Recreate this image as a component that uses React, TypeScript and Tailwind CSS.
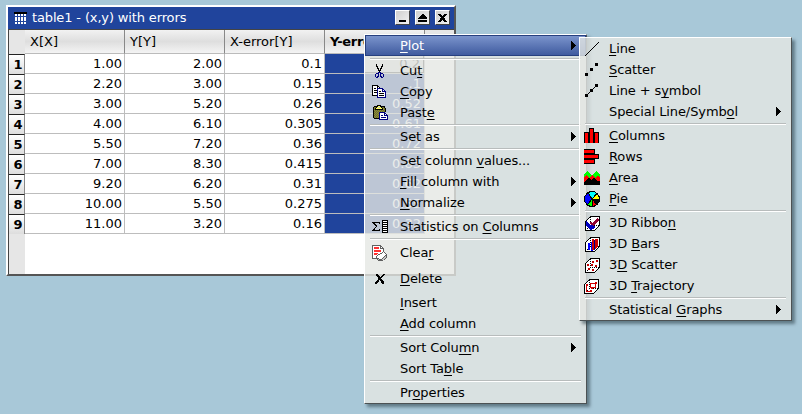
import React from "react";

type IconProps = { name: string };

const palette: Record<string, string> = {
  k: "#000000",
  w: "#ffffff",
  n: "#000080",
  y: "#ffff60",
  o: "#6e6e28",
  g: "#8a8a40",
  s: "#c8c8c8",
  d: "#606060",
  r: "#ff3030",
};

function Pixels({ rows }: { rows: string[] }) {
  return (
    <>
      {rows.flatMap((row, y) =>
        row.split("").map((c, x) =>
          palette[c] ? <rect key={x + "-" + y} x={x} y={y} width={1} height={1} fill={palette[c]} /> : null,
        ),
      )}
    </>
  );
}

const CUT = [
  "",
  "....k.....k",
  "....k.....k",
  "....kk...kk",
  ".....k...k",
  ".....kk.kk",
  "......k.k",
  "......kkk",
  ".......k",
  "......nnn",
  "....nnn.nnn",
  "...n..n.n..n",
  "...n..n.n..n",
  "...n.nn.nn.n",
  "....nn...nn",
];

const COPY = [
  "",
  "kkkkkk",
  "kwwwwkk",
  "kwwwwkwk",
  "kwkkwnnnnnn",
  "kwwwwnwwwwnn",
  "kwkkknwwwwnwn",
  "kwwwwnwkkwnnnn",
  "kwkkknwwwwwwwn",
  "kwwwwnwkkkkkwn",
  "kwwwwnwwwwwwwn",
  "kkkkknwkkkkkwn",
  ".....nwwwwwwwn",
  ".....nnnnnnnnn",
];

const PASTE = [
  ".....kkkk",
  "..kkkkyykkkkk",
  ".kooky..ykook",
  ".kgkyyyyyykgok",
  ".kokkkkkkkkgok",
  ".kgogogogogogk",
  ".kogogogogogok",
  ".kgogognnnnnn",
  ".kogogonwwwwnn",
  ".kgogognwwwwnwn",
  ".kogogonwnnwnnnn",
  ".kgogognwwwwwwwn",
  ".kogogonwnnnnnwn",
  "..kkkkknwwwwwwwn",
  ".......nnnnnnnnn",
];

const SUM = [
  "",
  "..........kkkkkk",
  "..........kwwwwk",
  "kkkkkkkk..kkkkkk",
  ".kk....k..kwwwwk",
  "..kk......kkkkkk",
  "...kk.....kwwwwk",
  "....k.....kkkkkk",
  "...k......kwwwwk",
  "..k.......kkkkkk",
  ".kk....k..kwwwwk",
  "kkkkkkkk..kkkkkk",
  "..........kwwwwk",
  "..........kkkkkk",
];

const CLEAR = [
  "ddddddddd",
  "dwwwwwwwdd",
  "dwrrrrrwdwd",
  "dwrrrrrwdddd",
  "dwwwwwwwwwwd",
  "dwrrrrrrrwwd",
  "dwrrrrrrrwwd",
  "dwwwwwwwwwdwd",
  "dwrrrrwwddwwwd",
  "dwrrrwddwwwwwwd",
  "dwwwwdwwwwwwwdd",
  "dwwwdwwwwwwwdsd",
  "dwwwdwwwwwwdssd",
  "dddddddwwwdssd",
  ".....dsdddssd",
  "......ddddd",
];

const DELETE = [
  "",
  "",
  "",
  "....kk.....kk",
  "....kkk...kk",
  ".....kkk.kk",
  "......kkkk",
  "......kkk",
  "......kkkk",
  ".....kk.kkk",
  "....kkk..kkk",
  "...kkk...kkk",
  "...kk.....kk",
];

function Cube() {
  return (
    <>
      <path d="M1.500 6.500L6.500 1.500H15.500V10.500L10.500 15.500H1.500Z" fill="#fff" stroke="#000" />
      <path d="M6.500 2v8.500h8M6.500 10.500L2 15" fill="none" stroke="#000" strokeDasharray="1 1" />
    </>
  );
}

function Dots({ points, size = 2 }: { points: number[][]; size?: number }) {
  return (
    <>
      {points.map(([x, y]) => (
        <rect key={x + "," + y} x={x} y={y} width={size} height={size} />
      ))}
    </>
  );
}

const glyphs: Record<string, React.ReactNode> = {
  cut: <Pixels rows={CUT} />,
  copy: <Pixels rows={COPY} />,
  paste: <Pixels rows={PASTE} />,
  sum: <Pixels rows={SUM} />,
  clear: <Pixels rows={CLEAR} />,
  delete: <Pixels rows={DELETE} />,
  line: <path d="M1 15L15 1" stroke="#000" />,
  scatter: <Dots size={3} points={[[1, 11], [6, 6], [11, 1]]} />,
  symbol: (
    <>
      <path d="M2 13L13 2" stroke="#000" />
      <Dots size={3} points={[[1, 11], [6, 6], [11, 1]]} />
    </>
  ),
  columns: (
    <>
      <path d="M0 4H5V0H10V4H15V15H0Z" fill="#000" />
      <path d="M1 5H4V15H1ZM6 1H9V15H6ZM11 5H14V15H11Z" fill="#f00" />
    </>
  ),
  rows: (
    <>
      <path d="M0 0H11V5H15V10H11V15H0Z" fill="#000" />
      <path d="M0 1H10V4H0ZM0 6H14V9H0ZM0 11H10V14H0Z" fill="#f00" />
    </>
  ),
  area: (
    <>
      <path d="M0 5L3 1L8 5L12 1L16 5V10H0Z" fill="#0f0" />
      <path d="M0 7L3 5L5 8L8 5L11 8L13 6L16 7V15H0Z" fill="#f00" />
      <path d="M0 12L5 8L7 10L10 8L14 11H16V15H0Z" fill="#000" />
    </>
  ),
  pie: (
    <g stroke="#000" strokeWidth="1">
      <circle cx="8" cy="8" r="7.500" fill="#00f" />
      <path d="M8 8L4 1.700A7.500 7.500 0 0 1 13 2.500Z" fill="#0ff" />
      <path d="M8 8L13 2.500A7.500 7.500 0 0 1 15.500 8Z" fill="#ff0" />
      <path d="M8 8H15.500A7.500 7.500 0 0 1 13 13.500Z" fill="#000" />
      <path d="M8 8L13 13.500A7.500 7.500 0 0 1 8 15.500Z" fill="#f00" />
      <path d="M8 8V15.500A7.500 7.500 0 0 1 3.500 14Z" fill="#0f0" />
    </g>
  ),
  ribbon: (
    <>
      <Cube />
      <path d="M2 6L7 10L10 8L11 13L7 15L2 11Z" fill="#0000c0" />
      <path d="M6 7L9 8L13 3L15 5L10 11L7 10Z" fill="#900030" />
    </>
  ),
  bars: (
    <>
      <Cube />
      <path d="M4 7H6V14H4ZM7 6H9V15H7Z" fill="#0000ff" />
      <path d="M8 3H10V14H8ZM11 3H14V11L11 13Z" fill="#d00000" />
      <path d="M10.500 4V14" stroke="#000080" />
    </>
  ),
  scatter3d: (
    <>
      <Cube />
      <g fill="#c00000">
        <Dots points={[[8, 4], [12, 3], [3, 7], [7, 7], [4, 11], [8, 12], [11, 8]]} />
      </g>
    </>
  ),
  trajectory: (
    <g transform="translate(-1 0)">
      <Cube />
      <path d="M3.500 7V13.500H8M7.500 10V5.500H13M9 9.500H12.500V6" fill="none" stroke="#d00000" />
      <g fill="#d00000">
        <Dots points={[[3, 6], [7, 12], [12, 4], [8, 9]]} />
      </g>
    </g>
  ),
};

function Icon({ name }: IconProps) {
  return (
    <svg className="block size-4 overflow-visible" viewBox="0 0 16 16" shapeRendering="crispEdges">
      {glyphs[name]}
    </svg>
  );
}

type Entry = { label?: string; icon?: string; arrow?: boolean; active?: boolean; size?: string };

/* An ampersand marks the mnemonic letter that follows it. */
const mainMenu: Entry[] = [
  { label: "&Plot", arrow: true, active: true, size: "mb-px h-[21px]" },
  {},
  { label: "Cu&t", icon: "cut" },
  { label: "&Copy", icon: "copy" },
  { label: "Past&e", icon: "paste" },
  {},
  { label: "Set as", arrow: true },
  {},
  { label: "Set column &values..." },
  { label: "&Fill column with", arrow: true },
  { label: "&Normalize", arrow: true },
  {},
  { label: "Statistics on &Columns", icon: "sum" },
  {},
  { label: "Clea&r", icon: "clear", size: "h-[25px]" },
  { label: "&Delete", icon: "delete", size: "h-[27px]" },
  { label: "&Insert" },
  { label: "&Add column" },
  {},
  { label: "Sort Colu&mn", arrow: true },
  { label: "Sort Ta&ble" },
  {},
  { label: "Pr&operties" },
];

const plotMenu: Entry[] = [
  { label: "&Line", icon: "line" },
  { label: "&Scatter", icon: "scatter" },
  { label: "Line + s&ymbol", icon: "symbol" },
  { label: "Special Line/Symb&ol", arrow: true },
  {},
  { label: "&Columns", icon: "columns" },
  { label: "&Rows", icon: "rows" },
  { label: "&Area", icon: "area" },
  { label: "&Pie", icon: "pie" },
  {},
  { label: "3D Ribbo&n", icon: "ribbon" },
  { label: "3D &Bars", icon: "bars" },
  { label: "3&D Scatter", icon: "scatter3d" },
  { label: "3D &Trajectory", icon: "trajectory" },
  {},
  { label: "Statistical &Graphs", arrow: true },
];

function Label({ text }: { text: string }) {
  const at = text.indexOf("&");
  if (at < 0) return <>{text}</>;
  return (
    <>
      {text.slice(0, at)}
      <span className="underline decoration-1 underline-offset-2 [text-decoration-skip-ink:none]">{text[at + 1]}</span>
      {text.slice(at + 2)}
    </>
  );
}

function Menu({ items, sub = false }: { items: Entry[]; sub?: boolean }) {
  return (
    <div className="border border-t-white border-l-white border-r-[#4c5254] border-b-[#4c5254] bg-[#e5e7e3]/80 bg-clip-padding shadow-[3px_3px_3px_rgba(40,60,70,0.55)]">
      {items.map((it, i) =>
        it.label ? (
          <div
            key={i}
            className={
              "flex items-center " +
              (it.size ?? "h-[21px]") +
              " " +
              (it.active
                ? "border border-[#27407f] bg-linear-to-b from-[#7b94cc] to-[#405b9f] text-white"
                : "text-black") +
              (sub ? " pl-1" : it.active ? " pl-1.5" : " pl-[7px]")
            }
          >
            <div className={sub ? "w-[25px]" : "w-7"}>{it.icon && <Icon name={it.icon} />}</div>
            <div className="flex-1 tracking-[-0.1px] whitespace-pre">
              <Label text={it.label} />
            </div>
            {it.arrow && (
              <svg className={"h-[9px] w-[5px] " + (it.active ? "mr-[9px] text-black" : "mr-2.5")} viewBox="0 0 5 9" shapeRendering="crispEdges">
                <path d="M0 0H1V1H2V2H3V3H4V4H5V5H4V6H3V7H2V8H1V9H0Z" />
              </svg>
            )}
          </div>
        ) : (
          <div key={i} className="h-[3px] pt-px pr-[5px] pl-[5px]">
            <div className="h-0.5 border-t border-b border-t-[#b8bcbc] border-b-white" />
          </div>
        ),
      )}
    </div>
  );
}

const data = [
  ["1.00", "2.00", "0.1", "0.2"],
  ["2.20", "3.00", "0.15", ".1"],
  ["3.00", "5.20", "0.26", "0.52"],
  ["4.00", "6.10", "0.305", "0.61"],
  ["5.50", "7.20", "0.36", "0.72"],
  ["7.00", "8.30", "0.415", "0.83"],
  ["9.20", "6.20", "0.31", "0.62"],
  ["10.00", "5.50", "0.275", "0.55"],
  ["11.00", "3.20", "0.16", "0.32"],
];

const headers = ["X[X]", "Y[Y]", "X-error[Y]", "Y-error[Y]"];

function TitleButton({ d }: { d: string }) {
  return (
    <svg className="block size-[15px] border border-t-white border-l-white border-r-[#444] border-b-[#444] bg-linear-to-br from-[#cfcfcf] to-[#f4f4f4]" viewBox="0 0 13 13" shapeRendering="crispEdges">
      <path d={d} />
    </svg>
  );
}

function TableWindow() {
  return (
    <div className="flex h-[271px] w-[450px] flex-col border-2 border-t-white border-l-white border-r-[#555] border-b-[#555] bg-white">
      <div className="flex h-[22px] shrink-0 items-center bg-[#20449c] pr-1 pb-px pl-1.5 text-white">
        <svg className="mr-[5px] h-3 w-[13px]" viewBox="0 0 13 12" shapeRendering="crispEdges">
          <path d="M0 0H13V2H0Z" fill="#000" />
          {[0, 1, 2, 3].flatMap((r) =>
            [0, 1, 2, 3].map((c) => <rect key={r + "" + c} x={c * 3 + 1} y={r * 2.5 + 2} width="2" height="2" fill="#fff" />),
          )}
        </svg>
        <div className="flex-1 tracking-[-0.14px]">table1 - (x,y) with errors</div>
        <div className="flex gap-[5px]">
          <TitleButton d="M3 9H10V11H3Z" />
          <TitleButton d="M2 7L6 3H7L11 7V8H2ZM2 9H11V11H2Z" />
          <TitleButton d="M2 3H5L6.500 5L8 3H11L8 6.500L11 11H8L6.500 8.500L5 11H2L5 6.500Z" />
        </div>
      </div>
      <div className="flex min-h-0 flex-1 border-t border-l border-[#444]">
        <div className="w-4 shrink-0 bg-[#e6e6e6] pt-6">
          {data.map((_, i) => (
            <div
              key={i}
              className="flex h-5 items-center justify-center border-t border-r border-t-[#222] border-r-[#888] bg-linear-to-b from-[#fff] to-[#ddd] pl-[3px] text-[13px] font-bold"
            >
              {i + 1}
            </div>
          ))}
        </div>
        <div className="flex-1">
          <div className="flex h-6 bg-[#e6e6e6]">
            {headers.map((h, i) => (
              <div
                key={h}
                className={
                  "flex h-6 w-[100px] items-center overflow-hidden border-r border-b border-r-[#888] border-b-[#bbb] bg-linear-to-b from-[#f2f2f2] via-[#dedede] to-[#f4f4f4] pl-[5px] " +
                  (i === 3 ? "font-bold tracking-[-0.3px]" : "")
                }
              >
                {h}
              </div>
            ))}
          </div>
          {data.map((row, i) => (
            <div key={i} className="flex h-5">
              {row.map((v, j) => (
                <div
                  key={j}
                  className={
                    "flex w-[100px] items-center justify-end border-r border-b border-[#bdbdbd] " +
                    (j === 3 ? "bg-[#20449c] pr-[3px] text-white" : "pr-0.5")
                  }
                >
                  {i === 0 && j === 3 ? (
                    <div className="-mr-[3px] flex h-[19px] w-[60px] items-center justify-end border-r border-b border-[#333] bg-[#ddd] pr-[3px] text-[#111]">
                      {v}
                    </div>
                  ) : (
                    v
                  )}
                </div>
              ))}
            </div>
          ))}
        </div>
      </div>
    </div>
  );
}

export default function App() {
  return (
    <div className="relative h-[414px] w-[802px] overflow-hidden bg-[#a8c8d8] pt-[5px] pl-1.5 font-['DejaVu_Sans',sans-serif] text-[13px] leading-none text-black">
      <TableWindow />
      <div className="absolute top-[34px] left-[364px] w-[223px]">
        <Menu items={mainMenu} />
      </div>
      <div className="absolute top-[37px] left-[579px] w-[213px]">
        <Menu items={plotMenu} sub />
      </div>
    </div>
  );
}
